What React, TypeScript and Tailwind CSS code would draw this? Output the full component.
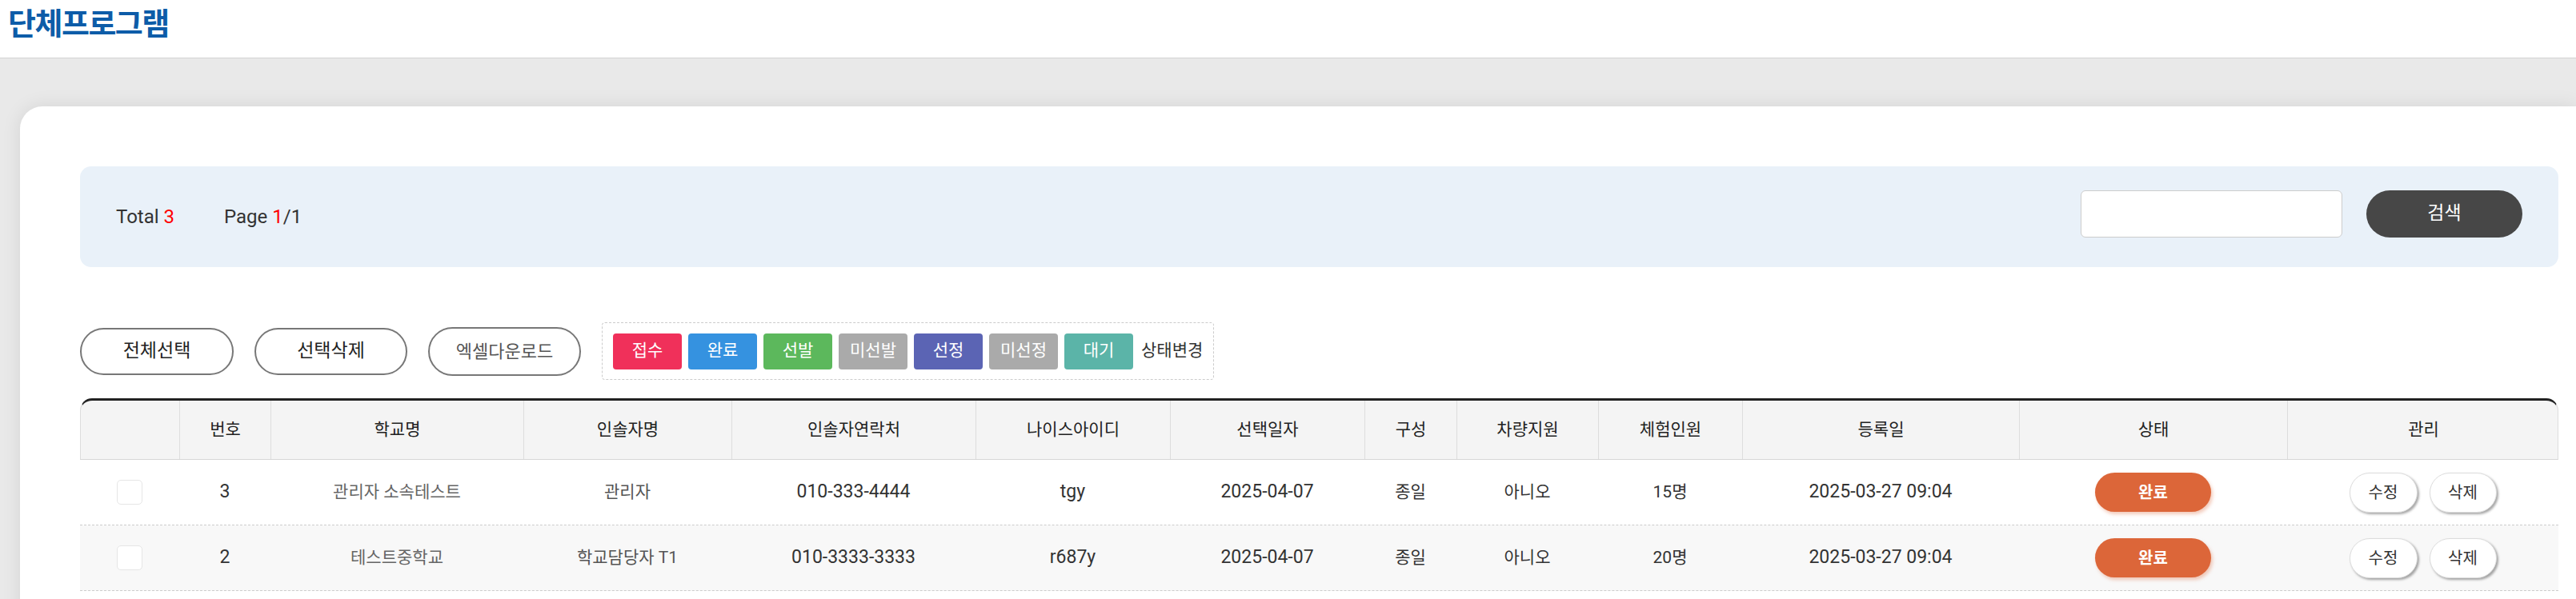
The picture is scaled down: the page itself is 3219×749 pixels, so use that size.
const cols =
  'grid grid-cols-[124px_114px_316px_260px_305px_243px_243px_115px_177px_180px_346px_335px_339px]';

const headers = ['', '번호', '학교명', '인솔자명', '인솔자연락처', '나이스아이디', '선택일자', '구성', '차량지원', '체험인원', '등록일', '상태', '관리'];

const rows = [
  { no: 3, school: '관리자 소속테스트', leader: '관리자', phone: '010-333-4444', neis: 'tgy', date: '2025-04-07', kind: '종일', car: '아니오', people: '15명', reg: '2025-03-27 09:04' },
  { no: 2, school: '테스트중학교', leader: '학교담당자 T1', phone: '010-3333-3333', neis: 'r687y', date: '2025-04-07', kind: '종일', car: '아니오', people: '20명', reg: '2025-03-27 09:04' },
];

const statusButtons = [
  { label: '접수', color: 'bg-[#f0305a]' },
  { label: '완료', color: 'bg-[#3592e0]' },
  { label: '선발', color: 'bg-[#5cb85c]' },
  { label: '미선발', color: 'bg-[#aaaaaa]' },
  { label: '선정', color: 'bg-[#5b64b4]' },
  { label: '미선정', color: 'bg-[#aaaaaa]' },
  { label: '대기', color: 'bg-[#5bb4a8]' },
];

export default function App() {
  return (
    <div className="min-h-screen overflow-hidden bg-[#e9e9e9] font-['Roboto','Noto_Sans_CJK_KR',sans-serif]">
      {/* Header */}
      <header className="h-[73px] bg-white border-b border-[#d3d3d3] pl-[10px] pt-[5px]">
        <h1 className="text-[38px] leading-[44px] font-bold text-[#0d5ca8] tracking-[-1.5px] font-['Noto_Sans_CJK_KR',sans-serif]">
          단체프로그램
        </h1>
      </header>

      {/* Card */}
      <div className="ml-[25px] mt-[60px] bg-white rounded-tl-[28px] shadow-[0_0_24px_rgba(0,0,0,0.09)] pt-[75px] pl-[75px] pr-[22px] pb-[40px]">
        {/* Search panel */}
        <div className="h-[126px] bg-[#e9f1f9] rounded-[14px] flex items-center justify-between pl-[45px] pr-[45px]">
          <div className="flex items-center gap-[62px] text-[24px] text-[#333]">
            <span>
              Total <span className="text-[#ff0000]">3</span>
            </span>
            <span>
              Page <span className="text-[#ff0000]">1</span>/1
            </span>
          </div>
          <div className="flex items-center gap-[30px] -mt-[7px]">
            <input className="w-[327px] h-[59px] bg-white border border-[#cccccc] rounded-[6px] outline-none px-3" />
            <button className="w-[195px] h-[59px] rounded-full bg-[#474747] text-white text-[23px]">검색</button>
          </div>
        </div>

        {/* Action row */}
        <div className="mt-[69px] h-[72px] flex items-center gap-[26px]">
          <button className="w-[192px] h-[59px] rounded-full border-2 border-[#777] text-[23px] text-[#222] bg-white">전체선택</button>
          <button className="w-[191px] h-[59px] rounded-full border-2 border-[#777] text-[23px] text-[#222] bg-white">선택삭제</button>
          <button className="w-[191px] h-[61px] rounded-full border-2 border-[#777] text-[22px] text-[#555] bg-white">엑셀다운로드</button>
          <div className="h-[72px] flex items-center gap-[8px] px-[13px] border border-dashed border-[#cccccc] rounded-[4px]">
            {statusButtons.map((b) => (
              <button
                key={b.label}
                className={`${b.color} h-[45px] min-w-[86px] px-[12px] rounded-[4px] text-white text-[21px]`}
              >
                {b.label}
              </button>
            ))}
            <span className="ml-[2px] text-[21px] text-[#333]">상태변경</span>
          </div>
        </div>

        {/* Table */}
        <div className="mt-[23px]">
          <div className={`${cols} bg-[#f4f4f4] border-t-[3px] border-t-[#222] border-x border-x-[#dddddd] border-b border-b-[#d6d6d6] rounded-t-[15px]`}>
            {headers.map((h, i) => (
              <div
                key={i}
                className={`h-[73px] flex items-center justify-center text-[21px] text-[#222] ${i < headers.length - 1 ? 'border-r border-[#dddddd]' : ''}`}
              >
                {h}
              </div>
            ))}
          </div>

          {rows.map((r, idx) => (
            <div
              key={r.no}
              className={`${cols} h-[82px] border-b border-dashed border-[#cccccc] text-[21px] text-[#333] ${idx % 2 === 1 ? 'bg-[#f8f8f8]' : 'bg-white'}`}
            >
              <div className="flex items-center justify-center">
                <span className="w-[32px] h-[31px] rounded-[5px] border border-[#e6e6e6] bg-white" />
              </div>
              <div className="flex items-center justify-center text-[23px]">{r.no}</div>
              <div className="flex items-center justify-center text-[#666]">{r.school}</div>
              <div className="flex items-center justify-center text-[#555]">{r.leader}</div>
              <div className="flex items-center justify-center text-[23px]">{r.phone}</div>
              <div className="flex items-center justify-center text-[23px]">{r.neis}</div>
              <div className="flex items-center justify-center text-[23px]">{r.date}</div>
              <div className="flex items-center justify-center">{r.kind}</div>
              <div className="flex items-center justify-center">{r.car}</div>
              <div className="flex items-center justify-center">{r.people}</div>
              <div className="flex items-center justify-center text-[23px]">{r.reg}</div>
              <div className="flex items-center justify-center">
                <span className="w-[145px] h-[49px] rounded-full bg-[#dc6639] text-white text-[20px] font-bold flex items-center justify-center shadow-[2px_3px_4px_rgba(220,102,57,0.35)]">
                  완료
                </span>
              </div>
              <div className="flex items-center justify-center gap-[15px]">
                <button className="w-[85px] h-[50px] rounded-full bg-white border border-[#dddddd] text-[20px] text-[#333] shadow-[2px_2px_3px_rgba(0,0,0,0.35)]">
                  수정
                </button>
                <button className="w-[84px] h-[50px] rounded-full bg-white border border-[#dddddd] text-[20px] text-[#333] shadow-[2px_2px_3px_rgba(0,0,0,0.35)]">
                  삭제
                </button>
              </div>
            </div>
          ))}
        </div>
      </div>
    </div>
  );
}
